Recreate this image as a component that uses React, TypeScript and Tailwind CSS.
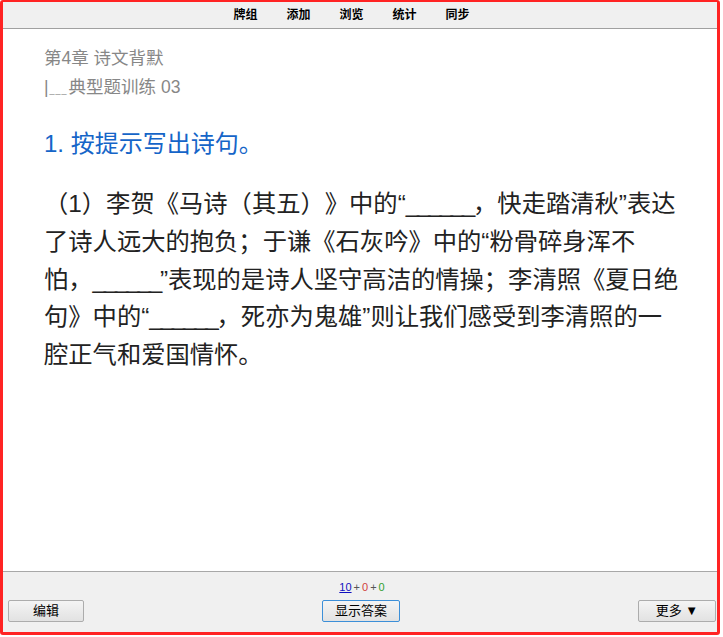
const navItems = ['牌组', '添加', '浏览', '统计', '同步'];

const cjk = { fontFamily: '"Liberation Sans", "Noto Sans CJK SC", sans-serif' };

function Blank() {
  return <span className="tracking-[-2.3px]">______</span>;
}

function Btn({ children, focused = false, className = '' }: { children: React.ReactNode; focused?: boolean; className?: string }) {
  return (
    <button
      className={
        'h-[22px] rounded-[2px] border bg-gradient-to-b from-[#f4f4f4] to-[#e2e2e2] text-[13px] text-black ' +
        (focused ? 'border-[#3c8fd8] ' : 'border-[#acacac] ') +
        className
      }
      style={cjk}
    >
      {children}
    </button>
  );
}

export default function App() {
  return (
    <div className="h-[637px] w-[723px] bg-white [text-spacing-trim:space-all]" style={cjk}>
      <div className="flex h-[635px] w-[720px] flex-col overflow-hidden rounded-[3px] border-[3px] border-t-2 border-[#ff2323]">
        <div className="flex h-[27px] shrink-0 items-center justify-center gap-[29px] border-b border-[#a0a0a0] bg-[#f0f0f0] pr-[17px]">
          {navItems.map((n) => (
            <span key={n} className="text-[12px] font-bold text-black">
              {n}
            </span>
          ))}
        </div>

        <div className="flex-1 bg-white pl-[41px] pr-[30px] pt-[15px]">
          <div className="text-[17.5px] leading-[29px] text-[#878787]">第4章 诗文背默</div>
          <div className="text-[17.5px] leading-[29px] text-[#878787]">
            |<span className="mx-[1px] text-[9px] tracking-[1px]">___</span>典型题训练 03
          </div>
          <div className="mt-[21px] text-[24px] leading-[36px] text-[#1565c8]">1. 按提示写出诗句。</div>
          <p className="mt-[23px] w-[637px] text-[24.3px] leading-[37.8px] text-[#222]">
            （1）李贺《马诗（其五）》中的“<Blank />，快走踏清秋”表达了诗人远大的抱负；于谦《石灰吟》中的“粉骨碎身浑不怕，<Blank />”表现的是诗人坚守高洁的情操；李清照《夏日绝句》中的“<Blank />，死亦为鬼雄”则让我们感受到李清照的一腔正气和爱国情怀。
          </p>
        </div>

        <div className="flex h-[61px] shrink-0 flex-col border-t border-[#a8a8a8] bg-[#f0f0f0] pl-[5px] pr-[1px]">
          <div className="mt-[8px] flex h-[14px] items-center justify-center text-[11px] leading-none" style={{ fontFamily: '"Liberation Sans", sans-serif' }}>
            <span className="text-[#1010c0] underline">10</span>
            <span className="mx-[2px] text-[#555]">+</span>
            <span className="text-[#d04040]">0</span>
            <span className="mx-[2px] text-[#555]">+</span>
            <span className="text-[#30a030]">0</span>
          </div>
          <div className="mt-[6px] flex items-center justify-between">
            <Btn className="w-[76px]">编辑</Btn>
            <Btn focused className="w-[78px]">显示答案</Btn>
            <Btn className="w-[78px]">更多 ▼</Btn>
          </div>
        </div>
      </div>
    </div>
  );
}
